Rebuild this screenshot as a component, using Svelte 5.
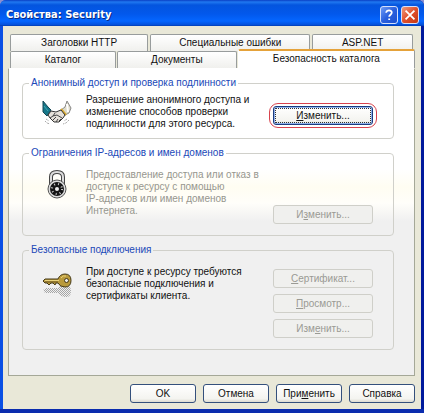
<script>
	let active = $state('directory');

	const upperTabs = [
		{ id: 'headers', label: 'Заголовки HTTP', grow: 138 },
		{ id: 'errors', label: 'Специальные ошибки', grow: 160 },
		{ id: 'aspnet', label: 'ASP.NET', grow: 100 }
	];
	const lowerTabs = [
		{ id: 'catalog', label: 'Каталог', grow: 105 },
		{ id: 'documents', label: 'Документы', grow: 119 },
		{ id: 'directory', label: 'Безопасность каталога', grow: 177 }
	];
</script>

{#snippet tab(item)}
	<button
		type="button"
		role="tab"
		class="tab"
		class:active={active === item.id}
		aria-selected={active === item.id}
		style="flex-grow: {item.grow}"
		onclick={() => (active = item.id)}>{item.label}</button
	>
{/snippet}

<main class="window">
	<header class="titlebar">
		<h1>Свойства: Security</h1>
		<button type="button" class="caption" aria-label="Справка">
			<svg viewBox="0 0 18 18">
				<path d="M5.8 6.6C5.8 2.7 12.3 3 12.1 6.5C12 8.7 9.2 8.7 9.2 11" />
				<path d="M9.2 13V14.6" />
			</svg>
		</button>
		<button type="button" class="caption close" aria-label="Закрыть">
			<svg viewBox="0 0 18 18"><path d="M4 4L14 14M14 4L4 14" /></svg>
		</button>
	</header>

	<div class="body">
		<div class="tabs" role="tablist">
			<div class="tab-row upper">
				{#each upperTabs as item (item.id)}{@render tab(item)}{/each}
			</div>
			<div class="tab-row lower">
				{#each lowerTabs as item (item.id)}{@render tab(item)}{/each}
			</div>
		</div>

		<div class="panel" role="tabpanel">
			<fieldset>
				<legend>Анонимный доступ и проверка подлинности</legend>
				<div class="group">
					<!-- Handshake -->
					<svg class="icon" viewBox="0 -4 34 34">
						<path d="M3 3L8 9L11 12L7 18L3 14Z" fill="#16788a" stroke="#154654" />
						<path d="M4 8L8 13" stroke="#43a8b5" />
						<path d="M27 3L31 10L29 15L25 17L21 12L25 9Z" fill="#dedbc9" stroke="#888" />
						<path d="M27 6L28 14" stroke="#fff" stroke-width="2" />
						<path d="M21 11L26 17" stroke="#d5a72e" stroke-width="2" />
						<path d="M8 17L11 13L16 14L21 12L25 17L23 20L19 24L14 24L10 20Z" fill="#e6e1da" stroke="#333" />
						<path d="M15 15L13 18L17 17L22 20M10 20L13 18M13 22L16 19M16 24L18 21M19 23L21 21" fill="none" stroke="#444" />
						<path d="M5 23L7 25L10 26M6 21L9 23M29 22L26 25L23 26M27 21L24 23" fill="none" stroke="#aaa" stroke-dasharray="2 1" />
					</svg>
					<p>Разрешение анонимного доступа и<br />изменение способов проверки<br />подлинности для этого ресурса.</p>
					<div class="actions ringed">
						<span class="ring"><button type="button" class="push focused"><u>И</u>зменить...</button></span>
					</div>
				</div>
			</fieldset>

			<fieldset>
				<legend>Ограничения IP-адресов и имен доменов</legend>
				<div class="group roomy">
					<!-- Combination padlock -->
					<svg class="icon" viewBox="0 -1 34 34">
						<path d="M11 15V7Q11 2 17 2Q23 2 23 7V15" fill="none" stroke="#444" stroke-width="4" />
						<path d="M11 15V7Q11 2 17 2Q23 2 23 7V15" fill="none" stroke="#ddd" stroke-width="2" />
						<circle cx="17" cy="19" r="9" fill="#ddd" stroke="#555" />
						<circle cx="17" cy="19" r="7" fill="#151515" />
						<circle cx="17" cy="19" r="5" fill="none" stroke="#ccc" stroke-width="2" stroke-dasharray="1 3" />
						<circle cx="17" cy="19" r="2" fill="#eee" />
					</svg>
					<p class="dim">Предоставление доступа или отказ в<br />доступе к ресурсу с помощью<br />IP-адресов или имен доменов<br />Интернета.</p>
					<div class="actions low">
						<button type="button" class="push" disabled>И<u>з</u>менить...</button>
					</div>
				</div>
			</fieldset>

			<fieldset>
				<legend>Безопасные подключения</legend>
				<div class="group roomy">
					<!-- Key with its dithered shadow -->
					<svg class="icon" viewBox="0 -4 34 34">
						<defs>
							<pattern id="dither" width="2" height="2" patternUnits="userSpaceOnUse">
								<path d="M0 0H1V1H0ZM1 1H2V2H1Z" fill="#a5a5a5" />
							</pattern>
						</defs>
						<path d="M3 20L6 18H18Q20 15 25 15Q31 15 31 21Q31 27 26 27Q21 27 18 23H5Z" fill="url(#dither)" />
						<path d="M3 11L5 9H18Q20 4 25 4Q31 4 31 10.5Q31 17 25 17Q20 17 18 13H16L15 15L13 13H11L9 15L7 13H5Z" fill="#b99a3c" stroke="#453918" />
						<path d="M5 10.5H19M21 8Q23 5 26 6" fill="none" stroke="#ead37c" />
						<path d="M5 12H18" stroke="#66521e" />
						<circle cx="26.5" cy="10.5" r="2" fill="#eee" stroke="#453918" />
					</svg>
					<p>При доступе к ресурсу требуются<br />безопасные подключения и<br />сертификаты клиента.</p>
					<div class="actions stack">
						<button type="button" class="push" disabled><u>С</u>ертификат...</button>
						<button type="button" class="push" disabled><u>П</u>росмотр...</button>
						<button type="button" class="push" disabled>Изм<u>е</u>нить...</button>
					</div>
				</div>
			</fieldset>
		</div>

		<footer>
			<button type="button" class="push">OK</button>
			<button type="button" class="push">Отмена</button>
			<button type="button" class="push">При<u>м</u>енить</button>
			<button type="button" class="push">Справка</button>
		</footer>
	</div>
</main>

<style>
	:global(body) {
		margin: 0;
		background: #8b8fd0;
	}
	.window,
	button {
		font-family: 'Liberation Sans', Arial, sans-serif;
		font-size: 10px;
		line-height: 12px;
		color: #111;
	}
	.window {
		box-sizing: border-box;
		padding: 0 3px;
		background: linear-gradient(90deg, #0a50e4 50%, #001a9c 50%);
		border-bottom: 4px solid #0a2cae;
		border-radius: 6px 6px 0 0;
		overflow: hidden;
	}
	.titlebar {
		display: flex;
		align-items: center;
		gap: 3px;
		box-sizing: border-box;
		height: 26px;
		margin: 0 -3px;
		padding: 3px 5px 0 6px;
		background: linear-gradient(#0a3fc4 0, #2078f0 2px, #0455de 5px, #0258ec 14px, #0466ff 21px, #0450d8 25px, #0238a8 26px);
	}
	h1 {
		flex: 1;
		margin: 0;
		font-family: 'DejaVu Sans Condensed', 'DejaVu Sans', sans-serif;
		font-size: 11px;
		line-height: 14px;
		font-weight: bold;
		color: #fff;
		text-shadow: 1px 1px 0 #0a2a80;
	}
	.caption {
		width: 18px;
		height: 18px;
		padding: 0;
		border: 1px solid #d5e0fb;
		border-radius: 3px;
		background: linear-gradient(135deg, #6d9bf5, #2a60de 50%, #1b50cf);
	}
	.caption.close {
		background: linear-gradient(135deg, #ee9a7c, #e0502c 50%, #c43712);
	}
	.caption svg {
		display: block;
		width: 16px;
		height: 16px;
		fill: none;
		stroke: #fff;
		stroke-width: 2;
	}
	.body {
		padding: 8px 6px 6px 5px;
		background: #e9e8d8;
	}
	.tabs {
		padding: 0 2px;
	}
	.tab-row {
		display: flex;
		align-items: flex-end;
		gap: 2px;
	}
	.lower {
		margin: -2px -2px 0 0;
		gap: 1px;
	}
	.tab {
		flex: 1 1 0;
		height: 17px;
		padding: 0;
		border: 1px solid #989c9c;
		border-bottom: 0;
		border-radius: 2px 2px 0 0;
		background: linear-gradient(#fff, #f0f0ed);
		white-space: nowrap;
	}
	.tab.active {
		height: 19px;
		padding-bottom: 2px;
		border-top: 2px solid #e5a23a;
		border-left-color: #fff;
		background: #fff;
	}
	.panel {
		display: flex;
		flex-direction: column;
		gap: 8px;
		padding: 8px 20px 25px 13px;
		border: 1px solid #a5a898;
		border-top-color: #fff;
		background: linear-gradient(#fff 100px, #fffdf2 118px, #fffefa 134px, #f0f0f0 152px);
	}
	fieldset {
		min-width: 0;
		margin: 0;
		padding: 0;
		border: 1px solid #d0d0ca;
		border-radius: 4px;
	}
	legend {
		margin-left: 6px;
		padding: 0 2px;
		color: #2048b8;
	}
	.group {
		display: flex;
		align-items: flex-start;
		padding: 5px 20px 8px 17px;
	}
	.group.roomy {
		padding-top: 10px;
		padding-bottom: 11px;
	}
	.icon {
		flex: none;
		width: 34px;
		height: 34px;
		margin-right: 12px;
	}
	p {
		flex: 1;
		margin: 0;
		white-space: nowrap;
	}
	.dim {
		color: #96968e;
	}
	.actions {
		display: flex;
		flex-direction: column;
		gap: 6px;
		width: 100px;
	}
	.actions.ringed {
		padding-top: 9px;
	}
	.actions.low {
		padding-top: 36px;
	}
	.actions.stack {
		padding-top: 3px;
	}
	.ring {
		margin: 0 -4px;
		padding: 2px 3px;
		border: 1px solid #d8434d;
		border-radius: 9px;
	}
	.push {
		box-sizing: border-box;
		width: 100%;
		height: 19px;
		padding: 0;
		border: 1px solid #34507c;
		border-radius: 3px;
		background: linear-gradient(#fff, #f4f4f0 80%, #dddcd2);
	}
	.push:disabled {
		border-color: #cfcfc9;
		background: #f0f0ee;
		color: #9a9a94;
	}
	.push.focused {
		display: block;
		border-color: #1c3c80;
		box-shadow: inset 0 0 0 1px #8fb0ea;
		outline: 1px dotted #333;
		outline-offset: -3px;
	}
	footer {
		display: flex;
		justify-content: flex-end;
		gap: 7px;
		padding-top: 8px;
	}
	footer .push {
		width: 66px;
	}
</style>
